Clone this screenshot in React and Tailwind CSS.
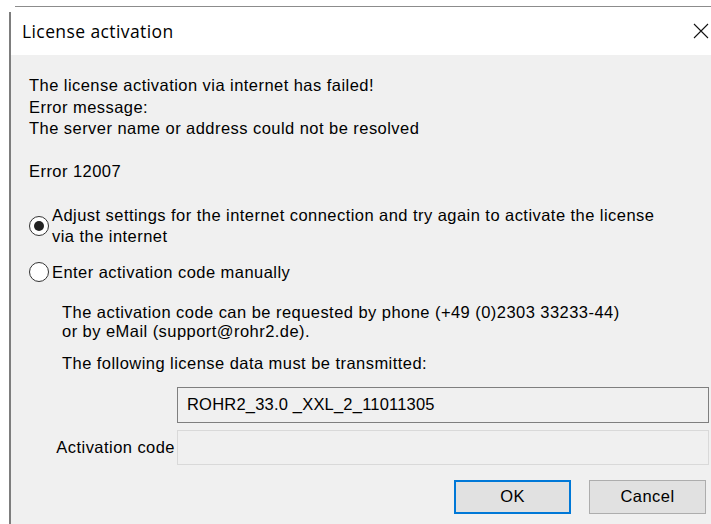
import { useState } from "react"

function CloseIcon() {
  return (
    <svg width="16" height="16" viewBox="0 0 16 16" className="block">
      <path d="M1 1 L15 15 M15 1 L1 15" stroke="#111" strokeWidth="1.1" fill="none" />
    </svg>
  )
}

function Radio({ checked, onClick }) {
  return (
    <button
      type="button"
      onClick={onClick}
      className="flex h-[20px] w-[20px] shrink-0 items-center justify-center rounded-full border-[1.5px] border-[#333] bg-white"
    >
      {checked && <span className="h-[10px] w-[10px] rounded-full bg-[#222]" />}
    </button>
  )
}

export default function App() {
  const [mode, setMode] = useState("retry")
  const [code, setCode] = useState("")

  return (
    <div className="flex h-[524px] w-[711px] flex-col overflow-hidden bg-white font-['Liberation_Sans',Arial,sans-serif] text-[16.5px] tracking-[0.45px] text-black">
      <div className="h-[6px]" />
      <div className="ml-[15px] h-px bg-[#8c8c8c]" />
      <div className="flex flex-1">
        <div className="w-[9px]" />
        <div className="mt-[5px] w-[2px] bg-[#7d7d7d]" />
        <div className="flex flex-1 flex-col">
          {/* title bar */}
          <div className="flex h-[48px] items-center justify-between bg-white pl-[11px] pr-[2px]">
            <span className="font-['Open_Sans',sans-serif] text-[17.5px] tracking-[0.4px]">License activation</span>
            <CloseIcon />
          </div>

          <div className="flex flex-1 flex-col bg-[#f0f0f0] pl-[18px] pr-[2px]">
            <div className="mt-[20px] leading-[21.5px]">
              <p>The license activation via internet has failed!</p>
              <p>Error message:</p>
              <p>The server name or address could not be resolved</p>
              <p className="mt-[21.5px]">Error 12007</p>
            </div>

            <div className="mt-[22px] flex items-center">
              <Radio checked={mode === "retry"} onClick={() => setMode("retry")} />
              <p className="ml-[3px] leading-[21px]">
                Adjust settings for the internet connection and try again to activate the license
                <br />
                via the internet
              </p>
            </div>

            <div className="mt-[15px] flex items-center">
              <Radio checked={mode === "manual"} onClick={() => setMode("manual")} />
              <p className="ml-[3px] leading-[21px]">Enter activation code manually</p>
            </div>

            <div className="ml-[33px] mt-[20px] leading-[19px]">
              <p>The activation code can be requested by phone (+49 (0)2303 33233-44)</p>
              <p>or by eMail (support@rohr2.de).</p>
              <p className="mt-[13px]">The following license data must be transmitted:</p>
            </div>

            <div className="ml-[148px] mt-[14px] flex h-[36px] items-center border border-[#7f7f7f] bg-[#f0f0f0] pl-[9px] tracking-[0.2px]">
              ROHR2_33.0 _XXL_2_11011305
            </div>

            <div className="mt-[7px] flex items-center">
              <label className="w-[148px] pr-[2px] text-right">Activation code</label>
              <input
                value={code}
                onChange={(e) => setCode(e.target.value)}
                className="h-[35px] flex-1 border border-[#d9d9d9] bg-[#f0f0f0] px-[9px] outline-none"
              />
            </div>

            <div className="mt-[15px] flex justify-end gap-[18px] pr-[3px]">
              <button
                type="button"
                className="h-[34px] w-[117px] border-2 border-[#0078d7] bg-[#e1e1e1]"
              >
                OK
              </button>
              <button
                type="button"
                className="h-[34px] w-[117px] border border-[#adadad] bg-[#e1e1e1]"
              >
                Cancel
              </button>
            </div>
          </div>
        </div>
      </div>
    </div>
  )
}
